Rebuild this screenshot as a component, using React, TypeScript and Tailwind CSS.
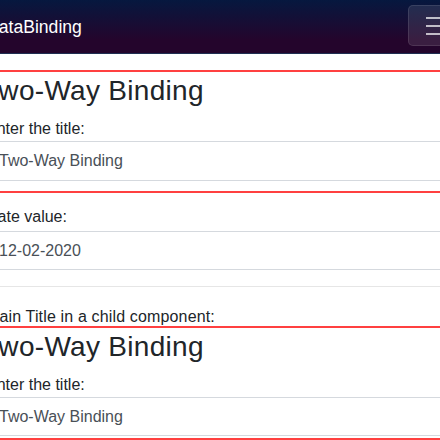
import React from "react";

function Field({ value, h }: { value: string; h: string }) {
  return (
    <input
      readOnly
      defaultValue={value}
      className={`block w-full ${h} border border-[#d5d9de] bg-white px-[12px] text-[16px] text-[#495057] outline-none`}
    />
  );
}

function TitleBlock({ last }: { last?: boolean }) {
  return (
    <div className="border-t-2 border-[#ff4040]">
      <h3 className="mt-[2px] mb-[9px] ml-[-3.5px] h-[34px] text-[28px] leading-[34px] font-normal tracking-[0.3px] text-[#212529]">
        Two-Way Binding
      </h3>
      <label className="block h-[24px] text-[16px] leading-[24px] text-[#212529]">Enter the title:</label>
      <Field value="Two-Way Binding" h={last ? "h-[39px]" : "h-[40px]"} />
    </div>
  );
}

export default function App() {
  return (
    <div className="w-[440px] h-[440px] overflow-hidden bg-white font-['Liberation_Sans',Arial,sans-serif]">
      <div className="flex h-[54px] w-[440px] items-center justify-between border-b border-white/10 bg-[linear-gradient(180deg,#06183f_0%,#24052c_75%)]">
        <div className="ml-[-14px] text-[17.6px] leading-[26px] text-white">DataBinding</div>
        <div className="mr-[-24px] mb-[3px] flex h-[41px] w-[56px] flex-col gap-[6px] rounded-[5px] border border-white/10 bg-white/10 pl-[17px] pt-[11px]">
          <div className="h-[2px] w-[22px] bg-white/70" />
          <div className="h-[2px] w-[22px] bg-white/70" />
          <div className="h-[2px] w-[22px] bg-white/70" />
        </div>
      </div>
      <div className="ml-[-14px] w-[480px] pt-[16px]">
        <TitleBlock />
        <div className="mt-[10px] border-t-2 border-[#ff4040]">
          <label className="mt-[12px] block h-[24px] text-[16px] leading-[24px] text-[#212529]">Date value:</label>
          <div className="mt-[2px]">
            <Field value="12-02-2020" h="h-[39px]" />
          </div>
          <hr className="mt-[16px] border-t border-[#e6e6e6]" />
          <label className="mt-[20px] block h-[19px] text-[16px] leading-[19px] tracking-[0.15px] text-[#212529]">
            Main Title in a child component:
          </label>
        </div>
        <TitleBlock last />
        <div className="mt-[2px] border-t-2 border-[#ff4040]" />
      </div>
    </div>
  );
}
